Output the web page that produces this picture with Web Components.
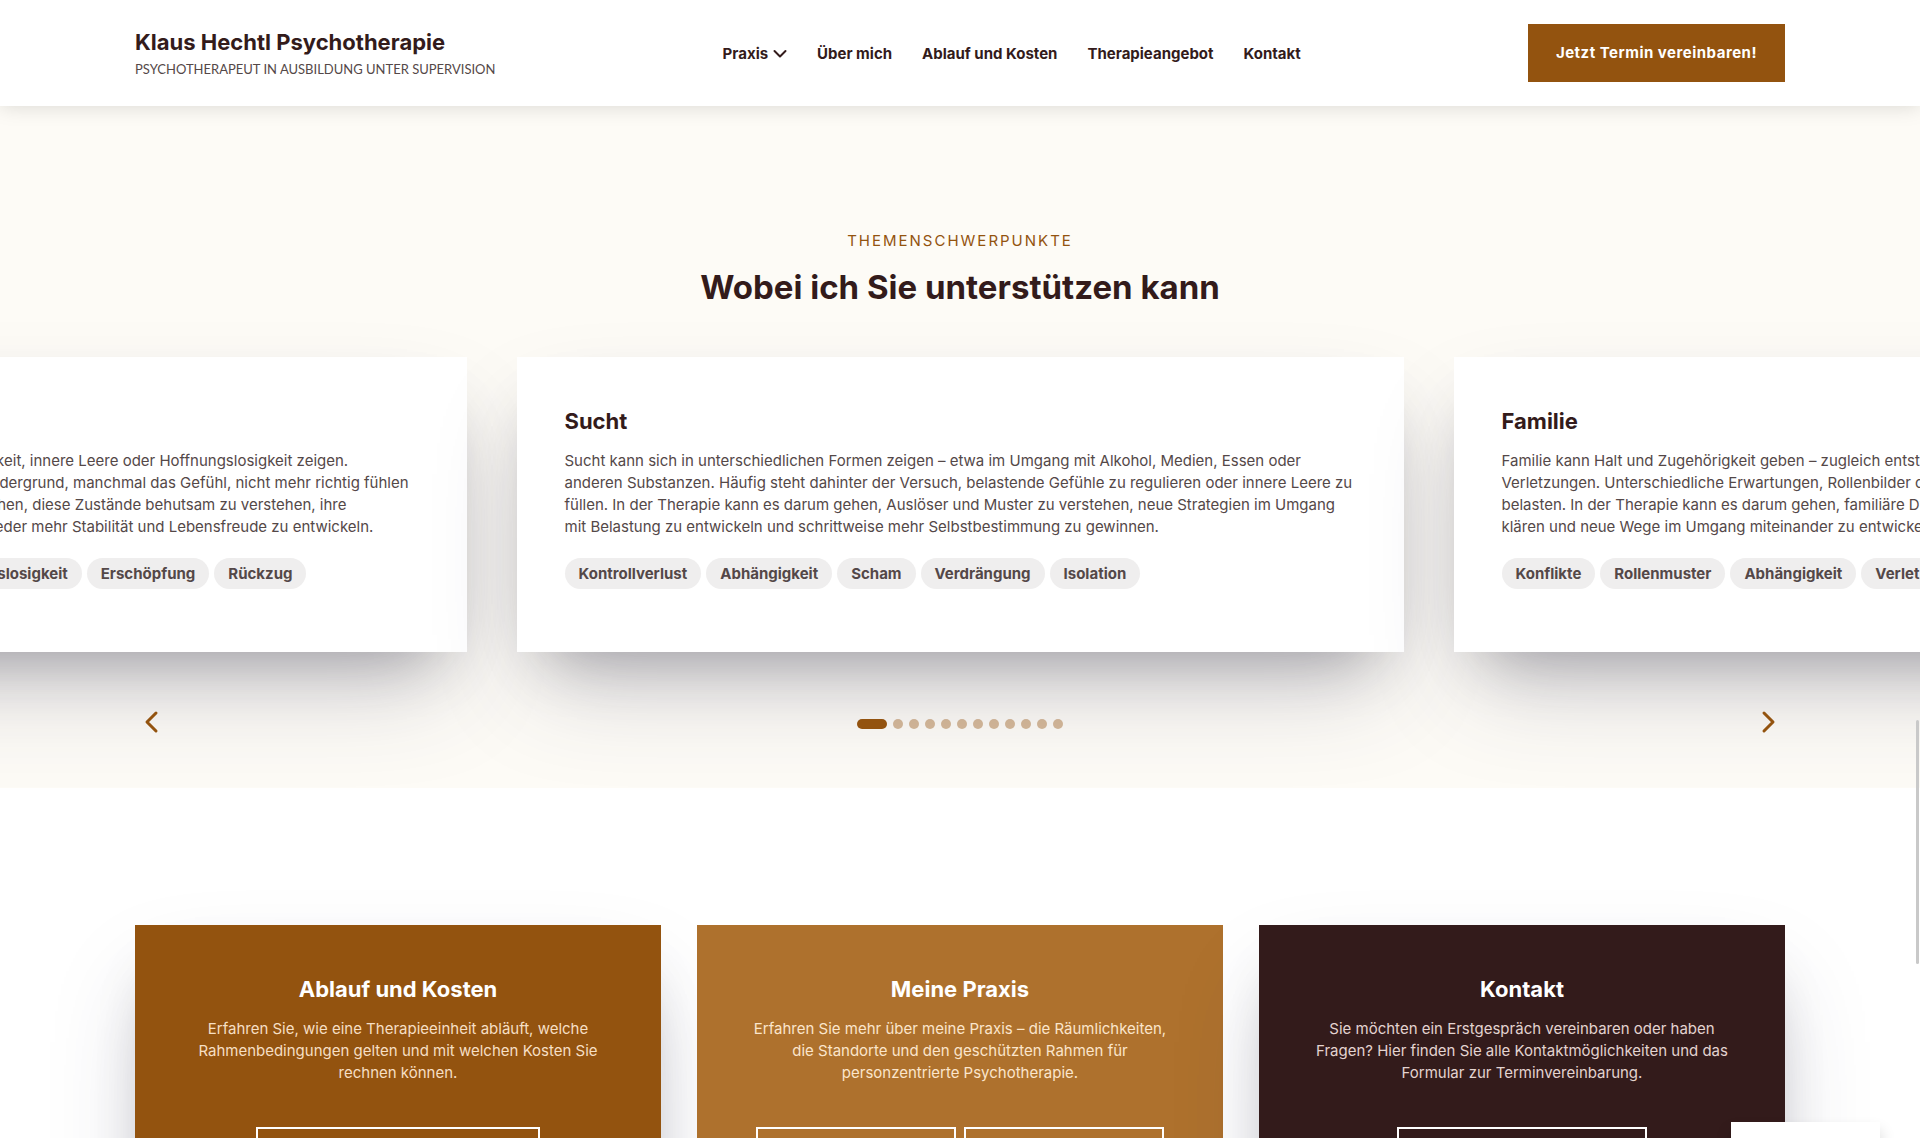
<!DOCTYPE html>
<html lang="de">
<head>
  <meta charset="UTF-8">
  <meta name="viewport" content="width=device-width, initial-scale=1.0">
  <title>Klaus Hechtl Psychotherapie</title>
  <style>
    :root {
      --brown: #93530f;
      --caramel: #ae712d;
      --dark: #331b1b;
      --text: #544848;
      --cream: #fdfbf6;
      --gutter: 135px;
      --card-shadow: 0 50px 100px -20px rgba(50, 50, 93, .25), 0 30px 60px -30px rgba(0, 0, 0, .3);
    }
    body {
      margin: 0;
      height: 100vh;
      overflow: hidden;
      background: #fff;
      color: var(--text);
      font: 15px/22px Inter, "Liberation Sans", sans-serif;
    }
  </style>
</head>
<body>
  <site-header>
    <nav-link href="#praxis" dropdown>Praxis</nav-link>
    <nav-link href="#ueber-mich">Über mich</nav-link>
    <nav-link href="#ablauf">Ablauf und Kosten</nav-link>
    <nav-link href="#therapie">Therapieangebot</nav-link>
    <nav-link href="#kontakt">Kontakt</nav-link>
  </site-header>

  <main>
    <topic-slider eyebrow="Themenschwerpunkte" heading="Wobei ich Sie unterstützen kann" pages="12">
      <topic-card heading="Depression" tags="Niedergeschlagenheit,Müdigkeit,Antriebslosigkeit,Erschöpfung,Rückzug">
        Depressionen können sich auch durch Antriebslosigkeit, innere Leere oder Hoffnungslosigkeit zeigen.<br>
        Manchmal steht immer mehr die Erschöpfung im Vordergrund, manchmal das Gefühl, nicht mehr richtig fühlen<br>
        zu können. Eine Therapie kann es Ihnen so ermöglichen, diese Zustände behutsam zu verstehen, ihre<br>
        Hintergründe und Ursachen gut zu erkennen und wieder mehr Stabilität und Lebensfreude zu entwickeln.
      </topic-card>
      <topic-card heading="Sucht" tags="Kontrollverlust,Abhängigkeit,Scham,Verdrängung,Isolation">
        Sucht kann sich in unterschiedlichen Formen zeigen – etwa im Umgang mit Alkohol, Medien, Essen oder<br>
        anderen Substanzen. Häufig steht dahinter der Versuch, belastende Gefühle zu regulieren oder innere Leere zu<br>
        füllen. In der Therapie kann es darum gehen, Auslöser und Muster zu verstehen, neue Strategien im Umgang<br>
        mit Belastung zu entwickeln und schrittweise mehr Selbstbestimmung zu gewinnen.
      </topic-card>
      <topic-card heading="Familie" tags="Konflikte,Rollenmuster,Abhängigkeit,Verletzungen">
        Familie kann Halt und Zugehörigkeit geben – zugleich entstehen hier oft Konflikte und<br>
        Verletzungen. Unterschiedliche Erwartungen, Rollenbilder oder Erfahrungen können<br>
        belasten. In der Therapie kann es darum gehen, familiäre Dynamiken zu verstehen, zu<br>
        klären und neue Wege im Umgang miteinander zu entwickeln.
      </topic-card>
    </topic-slider>

    <teaser-row>
      <teaser-card tone="brown" heading="Ablauf und Kosten">
        Erfahren Sie, wie eine Therapieeinheit abläuft, welche<br>Rahmenbedingungen gelten und mit welchen Kosten Sie<br>rechnen können.
        <outline-link slot="actions" size="l" label="Ablauf und Kosten" href="#ablauf"></outline-link>
      </teaser-card>
      <teaser-card tone="caramel" heading="Meine Praxis">
        Erfahren Sie mehr über meine Praxis – die Räumlichkeiten,<br>die Standorte und den geschützten Rahmen für<br>personzentrierte Psychotherapie.
        <outline-link slot="actions" size="s" label="Praxis" href="#praxis"></outline-link>
        <outline-link slot="actions" size="s" label="Standorte" href="#standorte"></outline-link>
      </teaser-card>
      <teaser-card tone="dark" heading="Kontakt">
        Sie möchten ein Erstgespräch vereinbaren oder haben<br>Fragen? Hier finden Sie alle Kontaktmöglichkeiten und das<br>Formular zur Terminvereinbarung.
        <outline-link slot="actions" size="m" label="Kontakt" href="#kontakt"></outline-link>
      </teaser-card>
    </teaser-row>
  </main>

  <corner-panel></corner-panel>
  <scroll-thumb></scroll-thumb>

  <script>
    function render(el, html) {
      el.attachShadow({mode: 'open'}).innerHTML = html
    }

    class SiteHeader extends HTMLElement {
      constructor() {
        super()
        render(this, `
          <style>
            :host { display: block; position: relative; z-index: 2; background: #fff; box-shadow: 0 0 20px rgba(0, 0, 0, .15); }
            header { display: flex; align-items: center; justify-content: space-between; padding: 24px var(--gutter); }
            .brand { color: var(--dark); text-decoration: none; }
            .name { display: block; font-size: 22px; line-height: 30px; font-weight: 700; }
            .claim { display: block; margin-top: 2px; font-family: Lato, sans-serif; font-size: 13px; line-height: 20px; color: var(--text); text-transform: uppercase; }
            nav { display: flex; gap: 30px; }
            button { padding: 18px 28px; border: 0; background: var(--brown); color: #fff; font: inherit; font-weight: 700; letter-spacing: 0.5px; cursor: pointer; }
          </style>
          <header>
            <a class="brand" href="#">
              <span class="name">Klaus Hechtl Psychotherapie</span>
              <span class="claim">Psychotherapeut in Ausbildung unter Supervision</span>
            </a>
            <nav><slot></slot></nav>
            <button type="button">Jetzt Termin vereinbaren!</button>
          </header>
        `)
      }
    }

    class NavLink extends HTMLElement {
      constructor() {
        super()
        const arrow = this.hasAttribute('dropdown')
          ? '<svg width="14" height="10" viewBox="0 0 14 10" fill="none" stroke="currentColor" stroke-width="2" stroke-linecap="round" stroke-linejoin="round"><path d="M1.500 2l5.500 5.500L12.500 2"/></svg>'
          : ''
        render(this, `
          <style>
            :host { display: block; }
            a { display: flex; align-items: center; gap: 5px; padding-top: 1px; color: var(--dark); font-weight: 700; text-decoration: none; white-space: nowrap; }
          </style>
          <a href="${this.getAttribute('href')}"><slot></slot>${arrow}</a>
        `)
      }
    }

    class TopicSlider extends HTMLElement {
      constructor() {
        super()
        const pages = Number(this.getAttribute('pages'))
        let dots = ''
        for (let i = 0; i < pages; i++) {
          dots += `<button type="button" class="dot${i === 0 ? ' active' : ''}" aria-label="Seite ${i + 1}"></button>`
        }
        render(this, `
          <style>
            :host { display: block; overflow: hidden; background: var(--cream); padding-top: 124px; }
            .eyebrow { margin: 0; text-align: center; color: var(--brown); text-transform: uppercase; letter-spacing: 2px; }
            h2 { margin: 13px 0 48px; text-align: center; font-size: 33px; line-height: 44px; font-weight: 700; color: var(--dark); }
            .track { display: flex; justify-content: center; gap: 50px; }
            .controls { display: flex; align-items: center; justify-content: space-between; padding: 52px var(--gutter) 48px; }
            .arrow { display: flex; padding: 6px 8px; border: 0; background: none; color: var(--brown); cursor: pointer; }
            .dots { display: flex; gap: 6px; padding-top: 4px; }
            .dot { width: 10px; height: 10px; padding: 0; border: 0; border-radius: 5px; background: var(--brown); opacity: .4; cursor: pointer; }
            .dot.active { width: 30px; opacity: 1; }
          </style>
          <section>
            <p class="eyebrow">${this.getAttribute('eyebrow')}</p>
            <h2>${this.getAttribute('heading')}</h2>
            <div class="track"><slot></slot></div>
            <div class="controls">
              <button type="button" class="arrow" aria-label="Zurück">
                <svg width="18" height="24" viewBox="0 0 18 24" fill="none" stroke="currentColor" stroke-width="3" stroke-linecap="round" stroke-linejoin="round"><path d="M13 3L4 12l9 9"/></svg>
              </button>
              <div class="dots">${dots}</div>
              <button type="button" class="arrow" aria-label="Weiter">
                <svg width="18" height="24" viewBox="0 0 18 24" fill="none" stroke="currentColor" stroke-width="3" stroke-linecap="round" stroke-linejoin="round"><path d="M5 3l9 9-9 9"/></svg>
              </button>
            </div>
          </section>
        `)
      }
    }

    class TopicCard extends HTMLElement {
      constructor() {
        super()
        const tags = this.getAttribute('tags').split(',').map(t => `<li>${t}</li>`).join('')
        render(this, `
          <style>
            :host { display: block; flex: 0 0 calc((100vw - 146px) / 2); box-sizing: border-box; padding: 48px 48px 63px; background: #fff; box-shadow: var(--card-shadow); }
            h3 { margin: 0; font-size: 22px; line-height: 32px; font-weight: 700; color: var(--dark); }
            p { margin: 13px 0 20px; white-space: nowrap; }
            ul { display: flex; gap: 5px; margin: 0; padding: 0; list-style: none; }
            li { padding: 5px 14px 4px; border-radius: 16px; background: #efeeee; font-weight: 700; white-space: nowrap; }
          </style>
          <article>
            <h3>${this.getAttribute('heading')}</h3>
            <p><slot></slot></p>
            <ul>${tags}</ul>
          </article>
        `)
      }
    }

    class TeaserRow extends HTMLElement {
      constructor() {
        super()
        render(this, `
          <style>
            :host { display: grid; grid-template-columns: repeat(3, 1fr); gap: 36px; padding: 137px var(--gutter); }
          </style>
          <slot></slot>
        `)
      }
    }

    class TeaserCard extends HTMLElement {
      constructor() {
        super()
        render(this, `
          <style>
            :host { display: block; padding: 48px 48px 60px; text-align: center; color: #fff; box-shadow: var(--card-shadow); }
            :host([tone="brown"]) { background: var(--brown); --copy: #f6dfc4; }
            :host([tone="caramel"]) { background: var(--caramel); --copy: #fbe5cb; box-shadow: none; }
            :host([tone="dark"]) { background: var(--dark); --copy: #e3d3d0; }
            h3 { margin: 0; font-size: 22px; line-height: 32px; font-weight: 700; }
            p { margin: 13px 0 43px; color: var(--copy); }
            .actions { display: flex; justify-content: center; gap: 8px; }
          </style>
          <article>
            <h3>${this.getAttribute('heading')}</h3>
            <p><slot></slot></p>
            <div class="actions"><slot name="actions"></slot></div>
          </article>
        `)
      }
    }

    class OutlineLink extends HTMLElement {
      constructor() {
        super()
        render(this, `
          <style>
            :host { display: block; width: 200px; }
            :host([size="m"]) { width: 250px; }
            :host([size="l"]) { width: 284px; }
            a { display: block; height: 54px; border: 2px solid #fff; }
          </style>
          <a href="${this.getAttribute('href')}" aria-label="${this.getAttribute('label')}"></a>
        `)
      }
    }

    class CornerPanel extends HTMLElement {
      constructor() {
        super()
        render(this, `
          <style>
            :host { display: block; position: fixed; z-index: 3; right: 40px; bottom: 0; width: 149px; height: 16px; background: #fff; box-shadow: 0 10px 16px rgba(0, 0, 0, .2); }
          </style>
        `)
      }
    }

    class ScrollThumb extends HTMLElement {
      constructor() {
        super()
        render(this, `
          <style>
            :host { display: block; position: fixed; z-index: 3; right: 1px; top: 720px; width: 3px; height: 244px; border-radius: 2px; background: #c9c9c9; }
          </style>
        `)
      }
    }

    customElements.define('site-header', SiteHeader)
    customElements.define('nav-link', NavLink)
    customElements.define('topic-slider', TopicSlider)
    customElements.define('topic-card', TopicCard)
    customElements.define('teaser-row', TeaserRow)
    customElements.define('teaser-card', TeaserCard)
    customElements.define('outline-link', OutlineLink)
    customElements.define('corner-panel', CornerPanel)
    customElements.define('scroll-thumb', ScrollThumb)
  </script>
</body>
</html>
